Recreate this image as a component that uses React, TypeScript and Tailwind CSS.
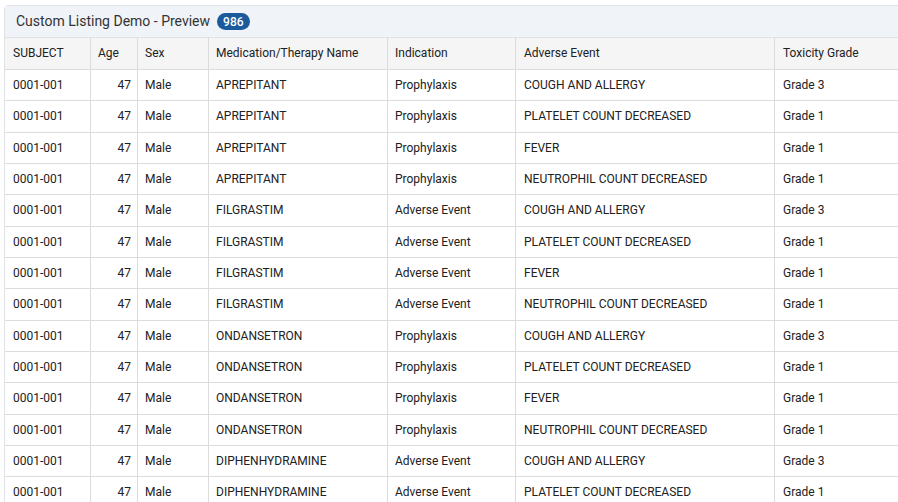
import React from "react";

const meds = [
  ["APREPITANT", "Prophylaxis"],
  ["FILGRASTIM", "Adverse Event"],
  ["ONDANSETRON", "Prophylaxis"],
  ["DIPHENHYDRAMINE", "Adverse Event"],
];
const aes = [
  ["COUGH AND ALLERGY", "Grade 3"],
  ["PLATELET COUNT DECREASED", "Grade 1"],
  ["FEVER", "Grade 1"],
  ["NEUTROPHIL COUNT DECREASED", "Grade 1"],
];

const rows: string[][] = [];
meds.forEach(([m, ind]) =>
  aes.forEach(([ae, g]) => rows.push(["0001-001", "47", "Male", m, ind, ae, g]))
);

const headers = [
  "SUBJECT",
  "Age",
  "Sex",
  "Medication/Therapy Name",
  "Indication",
  "Adverse Event",
  "Toxicity Grade",
];

const grid = "grid grid-cols-[86px_47px_71px_179px_128px_259px_1fr]";

const pad = (i: number) =>
  i === 0 || i >= 5 ? "px-[8px]" : "px-[7px]";

export default function App() {
  return (
    <div
      className="w-[898px] h-[502px] overflow-hidden bg-white pl-[4px] pt-[5px] text-[#212121]"
      style={{ fontFamily: "Roboto, 'Liberation Sans', sans-serif" }}
    >
      <div className="w-[1000px] border border-[#dfe3e8] rounded-tl-[4px]">
        <div className="h-[32px] bg-[#f0f4f8] border-b border-[#dfe3e8] flex items-center pl-[11px] gap-[7px]">
          <span className="text-[14px] text-[#333]">Custom Listing Demo - Preview</span>
          <span className="h-[17px] px-[6px] rounded-full bg-[#1b5b9b] text-white text-[12px] font-medium flex items-center leading-none">
            986
          </span>
        </div>
        <div className={`${grid} h-[32px] bg-[#f5f5f5] border-b border-[#dcdcdc] text-[12px]`}>
          {headers.map((h, i) => (
            <div
              key={i}
              className={`border-r border-[#dcdcdc] flex items-center pb-[1px] ${pad(i)}`}
            >
              {h}
            </div>
          ))}
        </div>
        {rows.map((r, ri) => (
          <div key={ri} className={`${grid} h-[31.33px] border-b border-[#dcdcdc] text-[12px]`}>
            {r.map((c, ci) => (
              <div
                key={ci}
                className={`border-r border-[#dcdcdc] flex items-center ${
                  ci === 1 ? "justify-end pr-[6px]" : pad(ci)
                }`}
              >
                {c}
              </div>
            ))}
          </div>
        ))}
      </div>
    </div>
  );
}
